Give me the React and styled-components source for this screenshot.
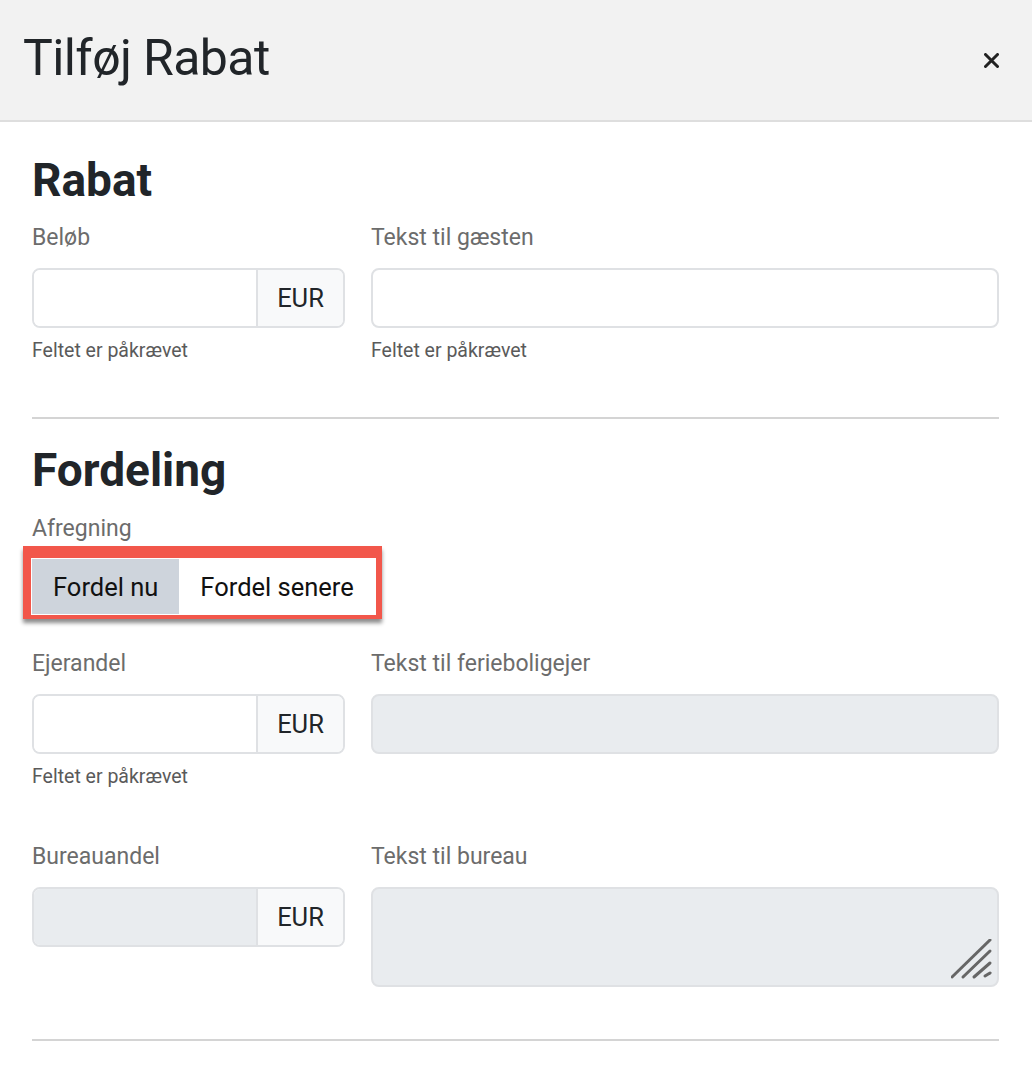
import React, { useState } from "react";
import styled, { createGlobalStyle } from "styled-components";

const GlobalStyle = createGlobalStyle`
  * { box-sizing: border-box; }
  body {
    margin: 0;
    background: #fff;
    font-family: Roboto, "Liberation Sans", Arial, sans-serif;
    color: #222;
  }
`;

const Modal = styled.div`
  width: 1032px;
  min-height: 1066px;
  background: #fff;
`;

const Header = styled.div`
  height: 122px;
  display: flex;
  align-items: center;
  justify-content: space-between;
  padding: 0 33px 0 23px;
  background: #f2f2f2;
  border-bottom: 2px solid #dedede;
`;

const Title = styled.h1`
  margin: 0 0 4px;
  font-size: 50px;
  font-weight: 400;
  letter-spacing: -0.6px;
  line-height: 60px;
  color: #212529;
`;

const CloseButton = styled.button`
  width: 15px;
  height: 15px;
  padding: 0;
  border: none;
  background: none;
  display: flex;
  cursor: pointer;
`;

const Body = styled.div`
  padding: 31px 33px 0 32px;
`;

const SectionTitle = styled.h2`
  margin: ${(p) => (p.$first ? "0" : "24px 0 0")};
  font-size: 46px;
  font-weight: 700;
  line-height: 55px;
  color: #212529;
`;

const FieldGrid = styled.div`
  display: grid;
  grid-template-columns: 313px 1fr;
  column-gap: 26px;
  row-gap: 54px;
  margin-top: 16px;
  align-items: start;
`;

const Field = styled.div`
  display: flex;
  flex-direction: column;
`;

const Label = styled.label`
  font-size: 23px;
  line-height: 28px;
  color: #6c6c6c;
  margin-bottom: 16px;
`;

const Help = styled.div`
  margin-top: 11px;
  font-size: 19.5px;
  line-height: 24px;
  color: #5a5a5a;
`;

const InputGroup = styled.div`
  display: flex;
  height: 60px;
  border: 2px solid #dfe1e4;
  border-radius: 8px;
  overflow: hidden;
`;

const GroupInput = styled.input`
  flex: 1;
  min-width: 0;
  border: none;
  padding: 0 16px;
  font: inherit;
  font-size: 25px;
  outline: none;
  background: #fff;

  &:disabled {
    background: #e9ecef;
  }
`;

const TextInput = styled.input`
  width: 100%;
  height: 60px;
  border: 2px solid #dfe1e4;
  border-radius: 8px;
  padding: 0 16px;
  font: inherit;
  font-size: 25px;
  outline: none;
  background: #fff;

  &:disabled {
    background: #e9ecef;
  }
`;

const Addon = styled.span`
  width: 87px;
  display: flex;
  align-items: center;
  justify-content: center;
  background: #f8f9fa;
  border-left: 2px solid #dfe1e4;
  font-size: 25.5px;
  color: #212529;
`;

const TextAreaWrap = styled.div`
  position: relative;
  height: 100px;
`;

const TextArea = styled.textarea`
  display: block;
  width: 100%;
  height: 100%;
  resize: none;
  border: 2px solid #dfe1e4;
  border-radius: 8px;
  font: inherit;
  font-size: 25px;
  padding: 12px 16px;
  outline: none;

  &:disabled {
    background: #e9ecef;
  }
`;

const ResizeHandle = styled.svg`
  position: absolute;
  right: 4px;
  bottom: 4px;
  pointer-events: none;
`;

const Divider = styled.hr`
  margin: ${(p) => p.$gap}px 0 0;
  border: none;
  border-top: 2px solid #d4d4d4;
`;

const Highlight = styled.div`
  display: inline-flex;
  align-self: flex-start;
  margin: 3px 0 0 -9px;
  padding: 1px;
  border-style: solid;
  border-color: #f2574b;
  border-width: 12px 6px 4px 8px;
  box-shadow: 0 4px 4px rgba(0, 0, 0, 0.45);
`;

const Toggle = styled.div`
  display: flex;
  height: 55px;
  box-shadow: inset 1px 1px 2px rgba(0, 0, 0, 0.25);
`;

const ToggleButton = styled.button`
  height: 55px;
  padding: 0 21px;
  border: none;
  font: inherit;
  font-size: 25.5px;
  color: #111;
  cursor: pointer;
  background: ${(p) => (p.$active ? "#ced4dc" : "#fff")};
`;

const SettleField = styled(Field)`
  margin-top: 17px;
`;

const SettleLabel = styled(Label)`
  margin-bottom: 0;
`;

const OwnerGrid = styled(FieldGrid)`
  margin-top: 31px;
`;

function AmountInput({ disabled }) {
  return (
    <InputGroup>
      <GroupInput type="text" disabled={disabled} />
      <Addon>EUR</Addon>
    </InputGroup>
  );
}

export default function App() {
  const [mode, setMode] = useState("now");

  return (
    <Modal>
      <GlobalStyle />
      <Header>
        <Title>Tilføj Rabat</Title>
        <CloseButton aria-label="Luk">
          <svg width="15" height="15" viewBox="0 0 15 15">
            <path
              d="M1.5 1.5 L13.5 13.5 M13.5 1.5 L1.5 13.5"
              stroke="#222"
              strokeWidth="3"
              strokeLinecap="round"
            />
          </svg>
        </CloseButton>
      </Header>

      <Body>
        <SectionTitle $first>Rabat</SectionTitle>
        <FieldGrid>
          <Field>
            <Label>Beløb</Label>
            <AmountInput />
            <Help>Feltet er påkrævet</Help>
          </Field>
          <Field>
            <Label>Tekst til gæsten</Label>
            <TextInput type="text" />
            <Help>Feltet er påkrævet</Help>
          </Field>
        </FieldGrid>

        <Divider $gap={54} />

        <SectionTitle>Fordeling</SectionTitle>
        <SettleField>
          <SettleLabel>Afregning</SettleLabel>
          <Highlight>
            <Toggle>
              <ToggleButton $active={mode === "now"} onClick={() => setMode("now")}>
                Fordel nu
              </ToggleButton>
              <ToggleButton $active={mode === "later"} onClick={() => setMode("later")}>
                Fordel senere
              </ToggleButton>
            </Toggle>
          </Highlight>
        </SettleField>

        <OwnerGrid>
          <Field>
            <Label>Ejerandel</Label>
            <AmountInput />
            <Help>Feltet er påkrævet</Help>
          </Field>
          <Field>
            <Label>Tekst til ferieboligejer</Label>
            <TextInput type="text" disabled />
          </Field>
          <Field>
            <Label>Bureauandel</Label>
            <AmountInput disabled />
          </Field>
          <Field>
            <Label>Tekst til bureau</Label>
            <TextAreaWrap>
              <TextArea disabled />
              <ResizeHandle width="44" height="44" viewBox="0 0 44 44">
                <g stroke="#666" strokeWidth="3" strokeLinecap="round">
                  <line x1="1" y1="38" x2="39" y2="1" />
                  <line x1="12" y1="38" x2="39" y2="12" />
                  <line x1="23" y1="38" x2="39" y2="24" />
                  <line x1="34" y1="37" x2="39" y2="34" />
                </g>
              </ResizeHandle>
            </TextAreaWrap>
          </Field>
        </OwnerGrid>

        <Divider $gap={52} />
      </Body>
    </Modal>
  );
}
